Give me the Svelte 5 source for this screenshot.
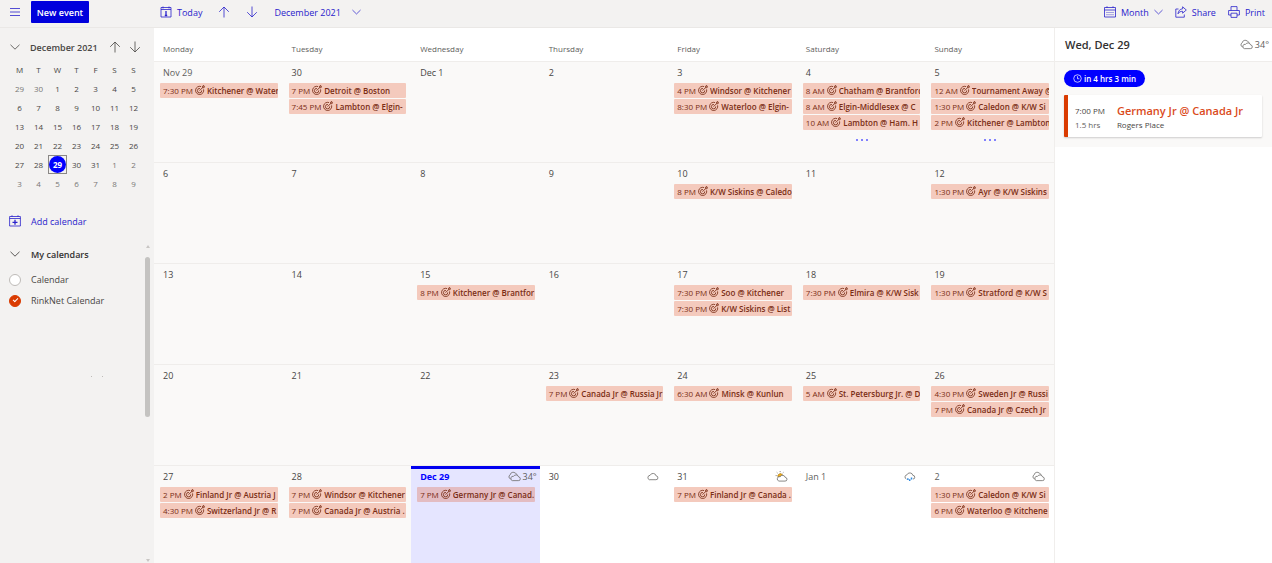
<script lang="ts">
  type CalendarEvent = { time: string; title: string };
  type Weather = 'cloudy' | 'cloud' | 'sunny' | 'rain';
  type Day = {
    label: string;
    events?: CalendarEvent[];
    more?: boolean;
    weather?: Weather;
    temp?: string;
    today?: boolean;
    outside?: boolean;
    future?: boolean;
  };

  const ev = (time: string, title: string): CalendarEvent => ({ time, title });

  const weekdays = [
    'Monday',
    'Tuesday',
    'Wednesday',
    'Thursday',
    'Friday',
    'Saturday',
    'Sunday',
  ];

  const weeks: Day[][] = [
    [
      { label: 'Nov 29', outside: true, events: [ev('7:30 PM', 'Kitchener @ Water')] },
      {
        label: '30',
        events: [ev('7 PM', 'Detroit @ Boston'), ev('7:45 PM', 'Lambton @ Elgin-')],
      },
      { label: 'Dec 1' },
      { label: '2' },
      {
        label: '3',
        events: [ev('4 PM', 'Windsor @ Kitchener'), ev('8:30 PM', 'Waterloo @ Elgin-')],
      },
      {
        label: '4',
        more: true,
        events: [
          ev('8 AM', 'Chatham @ Brantford'),
          ev('8 AM', 'Elgin-Middlesex @ C'),
          ev('10 AM', 'Lambton @ Ham. H'),
        ],
      },
      {
        label: '5',
        more: true,
        events: [
          ev('12 AM', 'Tournament Away @'),
          ev('1:30 PM', 'Caledon @ K/W Si'),
          ev('2 PM', 'Kitchener @ Lambton'),
        ],
      },
    ],
    [
      { label: '6' },
      { label: '7' },
      { label: '8' },
      { label: '9' },
      { label: '10', events: [ev('8 PM', 'K/W Siskins @ Caledo')] },
      { label: '11' },
      { label: '12', events: [ev('1:30 PM', 'Ayr @ K/W Siskins')] },
    ],
    [
      { label: '13' },
      { label: '14' },
      { label: '15', events: [ev('8 PM', 'Kitchener @ Brantfor')] },
      { label: '16' },
      {
        label: '17',
        events: [ev('7:30 PM', 'Soo @ Kitchener'), ev('7:30 PM', 'K/W Siskins @ List')],
      },
      { label: '18', events: [ev('7:30 PM', 'Elmira @ K/W Sisk')] },
      { label: '19', events: [ev('1:30 PM', 'Stratford @ K/W S')] },
    ],
    [
      { label: '20' },
      { label: '21' },
      { label: '22' },
      { label: '23', events: [ev('7 PM', 'Canada Jr @ Russia Jr')] },
      { label: '24', events: [ev('6:30 AM', 'Minsk @ Kunlun')] },
      { label: '25', events: [ev('5 AM', 'St. Petersburg Jr. @ D')] },
      {
        label: '26',
        events: [ev('4:30 PM', 'Sweden Jr @ Russi'), ev('7 PM', 'Canada Jr @ Czech Jr')],
      },
    ],
    [
      {
        label: '27',
        events: [ev('2 PM', 'Finland Jr @ Austria J'), ev('4:30 PM', 'Switzerland Jr @ R')],
      },
      {
        label: '28',
        events: [ev('7 PM', 'Windsor @ Kitchener'), ev('7 PM', 'Canada Jr @ Austria .')],
      },
      {
        label: 'Dec 29',
        today: true,
        weather: 'cloudy',
        temp: '34°',
        events: [ev('7 PM', 'Germany Jr @ Canad.')],
      },
      { label: '30', future: true, weather: 'cloud' },
      {
        label: '31',
        future: true,
        weather: 'sunny',
        events: [ev('7 PM', 'Finland Jr @ Canada .')],
      },
      { label: 'Jan 1', future: true, outside: true, weather: 'rain' },
      {
        label: '2',
        future: true,
        outside: true,
        weather: 'cloudy',
        events: [ev('1:30 PM', 'Caledon @ K/W Si'), ev('6 PM', 'Waterloo @ Kitchene')],
      },
    ],
  ];

  const miniHeads = ['M', 'T', 'W', 'T', 'F', 'S', 'S'];
  // Six weeks, starting from Monday 29 November
  const miniWeeks = Array.from({ length: 6 }, (_, week) =>
    Array.from({ length: 7 }, (_, day) => {
      const offset = week * 7 + day - 1;
      if (offset < 1) return { num: 30 + offset, dim: true, today: false };
      if (offset > 31) return { num: offset - 31, dim: true, today: false };
      return { num: offset, dim: false, today: offset === 29 };
    })
  );

  let showCalendar = $state(false);
  let showRinkNet = $state(true);
</script>

{#snippet arrow(down: boolean)}
  <svg class="icon" class:flip={down} viewBox="0 0 12 12" aria-hidden="true">
    <path d="M6 11.5V1M1.2 5.8 6 1l4.8 4.8" />
  </svg>
{/snippet}

{#snippet chevron()}
  <svg class="chevron" viewBox="0 0 10 6" aria-hidden="true">
    <path d="M.5.8 5 5.2 9.5.8" />
  </svg>
{/snippet}

{#snippet weatherIcon(kind: Weather)}
  <svg class="weather" viewBox="0 0 14 12" aria-hidden="true">
    {#if kind === 'cloudy'}
      <path d="M4.800 10.500h6.400a2 2 0 0 0 .3-4A3 3 0 0 0 6 5.800 2.400 2.400 0 0 0 4.800 10.500Z" />
      <path d="M2.800 8.600A2.300 2.300 0 0 1 2.200 4.300 3.400 3.400 0 0 1 8 2.400L10.300 4.200" />
    {:else if kind === 'cloud'}
      <path d="M3.500 9.500h7.200a2 2 0 0 0 .3-4.100A3.500 3.500 0 0 0 4.400 4.700 2.500 2.500 0 0 0 3.500 9.500Z" />
    {:else if kind === 'sunny'}
      <path class="sun" d="M3.300 6.800a2.600 2.600 0 1 1 4.900-2.300L5.500 6Z" />
      <path d="M5.500 1.200V0M2.700 2.300l-.9-.9M8.300 2.300l.9-.9M1.800 5H.6" />
      <path class="fill" d="M4.200 11h6.600a2 2 0 0 0 .3-4A3 3 0 0 0 5.600 6.200 2.500 2.500 0 0 0 4.200 11Z" />
    {:else}
      <path d="M3.600 8.800a2.400 2.400 0 0 1 .6-4.600A3.400 3.400 0 0 1 10.700 4.800a2 2 0 0 1 .1 4" />
      <path class="drop" d="M5.200 7.800v2M7.200 9v2M9.200 7.200v2" />
    {/if}
  </svg>
{/snippet}

{#snippet target()}
  <svg class="target" viewBox="0 0 12 12" aria-hidden="true">
    <path d="M7.300 1.900A4.900 4.900 0 1 0 10.300 5.200" />
    <path d="M6 4.200A2.600 2.600 0 1 0 8.100 6.500" />
    <path d="M5.400 6.800 9 3.200V1.500L10.400.4V1.900L11.700 2 10.600 3.300H9" />
  </svg>
{/snippet}

<div class="app">
  <header class="topbar">
    <div class="topbar-left">
      <button class="plain" type="button" aria-label="Toggle navigation">
        <svg class="icon" viewBox="0 0 12 12" aria-hidden="true">
          <path d="M1 2.500h10M1 6h10M1 9.500h10" />
        </svg>
      </button>
      <button class="new-event" type="button">New event</button>
    </div>
    <div class="toolbar">
      <button class="plain" type="button">
        <svg class="icon" viewBox="0 0 12 12" aria-hidden="true">
          <path d="M1 1.500h10v9.500H1ZM1 3.500h10M3 .5v2M9 .5v2" />
          <path class="solid" d="M6 5v2M6 7v3M4.800 9.500h2.400" />
        </svg>
        Today
      </button>
      <button class="plain" type="button" aria-label="Previous month">{@render arrow(false)}</button>
      <button class="plain" type="button" aria-label="Next month">{@render arrow(true)}</button>
      <button class="plain range" type="button">December 2021 {@render chevron()}</button>
    </div>
    <div class="actions">
      <button class="plain" type="button">
        <svg class="icon" viewBox="0 0 12 12" aria-hidden="true">
          <path d="M.5 1.500h11v9.500H.5ZM.5 4h11M3 .3v1.500M9 .3v1.500" />
          <path class="dots" d="M2.500 6.500h7M2.500 8.700h7" />
        </svg>
        Month {@render chevron()}
      </button>
      <button class="plain" type="button">
        <svg class="icon" viewBox="0 0 12 12" aria-hidden="true">
          <path d="M3.500 3H.8v8.200h8.500V8.500" />
          <path d="M7.600.8 11.300 4 7.600 7.200V5.300C5.500 5.300 4 6 3 7.800 3.300 4.800 5 3 7.600 2.800Z" />
        </svg>
        Share
      </button>
      <button class="plain" type="button">
        <svg class="icon" viewBox="0 0 12 12" aria-hidden="true">
          <path d="M3 4.500V.6h6v3.900M3 9H.6V4.500h10.800V9H9M3 7.200h6v4.200H3Z" />
        </svg>
        Print
      </button>
    </div>
  </header>

  <div class="body">
    <aside class="sidebar">
      <div class="mini-head">
        <button class="plain" type="button" aria-label="Collapse calendar">{@render chevron()}</button>
        <span class="mini-title">December 2021</span>
        <button class="plain" type="button" aria-label="Previous">{@render arrow(false)}</button>
        <button class="plain" type="button" aria-label="Next">{@render arrow(true)}</button>
      </div>
      <table class="mini">
        <thead>
          <tr>
            {#each miniHeads as head}
              <th>{head}</th>
            {/each}
          </tr>
        </thead>
        <tbody>
          {#each miniWeeks as week}
            <tr>
              {#each week as day}
                <td class:dim={day.dim} class:current={day.today}>
                  <button type="button">{day.num}</button>
                </td>
              {/each}
            </tr>
          {/each}
        </tbody>
      </table>

      <button class="plain add" type="button">
        <svg class="icon" viewBox="0 0 12 12" aria-hidden="true">
          <path d="M.6 1.500h10.800v9.500H.6ZM.6 3.500h10.800M3 .3v1.500M9 .3v1.500" />
          <path class="solid" d="M6 4.800v5M3.500 7.300h5" />
        </svg>
        Add calendar
      </button>

      <div class="lists">
        <div class="list-items">
          <button class="plain group" type="button">{@render chevron()} My calendars</button>
          <label class="calendar">
            <input type="checkbox" bind:checked={showCalendar} />
            Calendar
          </label>
          <label class="calendar">
            <input type="checkbox" bind:checked={showRinkNet} />
            RinkNet Calendar
          </label>
          <div class="specks"><i></i><i></i></div>
        </div>
        <div class="scrollbar" aria-hidden="true">
          <span class="cap up"></span>
          <span class="thumb"></span>
          <span class="cap down"></span>
        </div>
      </div>
    </aside>

    <main class="month">
      <table class="grid">
        <thead>
          <tr>
            {#each weekdays as name}
              <th>{name}</th>
            {/each}
          </tr>
        </thead>
        <tbody>
          {#each weeks as week}
            <tr>
              {#each week as day}
                <td class:today={day.today} class:future={day.future}>
                  <div class="day-head" class:outside={day.outside}>
                    <span class="day-label">{day.label}</span>
                    {#if day.weather}
                      <span class="forecast">
                        {@render weatherIcon(day.weather)}
                        {day.temp ?? ''}
                      </span>
                    {/if}
                  </div>
                  <div class="events">
                    {#each day.events ?? [] as event}
                      <button class="event" type="button">
                        <span>{event.time}</span>
                        {@render target()}
                        <strong>{event.title}</strong>
                      </button>
                    {/each}
                    {#if day.more}
                      <button class="more" type="button" aria-label="More events">
                        <i></i><i></i><i></i>
                      </button>
                    {/if}
                  </div>
                </td>
              {/each}
            </tr>
          {/each}
        </tbody>
      </table>
    </main>

    <section class="agenda">
      <div class="agenda-head">
        <h2>Wed, Dec 29</h2>
        <span class="forecast">{@render weatherIcon('cloudy')} 34°</span>
      </div>
      <div class="agenda-body">
        <span class="pill">
          <svg viewBox="0 0 10 10" aria-hidden="true">
            <circle cx="5" cy="5" r="4.200" />
            <path d="M5 2.500V5.300h2" />
          </svg>
          in 4 hrs 3 min
        </span>
        <article class="card">
          <div class="when">
            <span>7:00 PM</span>
            <span class="length">1.5 hrs</span>
          </div>
          <div class="what">
            <h3>Germany Jr @ Canada Jr</h3>
            <span>Rogers Place</span>
          </div>
        </article>
      </div>
    </section>
  </div>
</div>

<style>
  :global(body) {
    margin: 0;
    font-family: 'Open Sans', 'Noto Sans', sans-serif;
    background: #fff;
  }

  .app {
    display: flex;
    flex-direction: column;
    height: 100vh;
    overflow: hidden;
    font-size: 9px;
    color: #484644;
  }

  button {
    margin: 0;
    padding: 0;
    border: 0;
    background: none;
    font: inherit;
    color: inherit;
    cursor: pointer;
  }

  table {
    border-collapse: collapse;
    table-layout: fixed;
  }

  svg {
    display: block;
    flex: none;
    fill: none;
    stroke: currentColor;
    stroke-width: 0.8;
  }

  .icon {
    width: 12px;
    height: 12px;
  }

  .flip {
    transform: rotate(180deg);
  }

  .chevron {
    width: 10px;
    height: 6px;
  }

  .topbar .chevron {
    width: 9px;
  }

  .solid {
    stroke-width: 1.3;
  }

  .dots {
    stroke-dasharray: 1 1;
  }

  .plain {
    display: flex;
    align-items: center;
    gap: 5px;
  }

  /* Top bar */
  .topbar {
    display: flex;
    flex: none;
    height: 27px;
    background: #f3f2f1;
    border-bottom: 1px solid #eae8e6;
    color: #2a22cc;
  }

  .topbar-left {
    display: flex;
    align-items: center;
    gap: 10px;
    width: 145px;
    height: 24px;
    padding-left: 9px;
  }

  .new-event {
    width: 58px;
    height: 22px;
    background: #0000dc;
    border-radius: 1px;
    color: #fff;
    font-weight: 600;
  }

  .toolbar {
    display: flex;
    align-items: center;
    gap: 16px;
    height: 24px;
    padding-left: 6px;
  }

  .range {
    gap: 11px;
  }

  .actions {
    display: flex;
    align-items: center;
    gap: 12px;
    height: 24px;
    margin-left: auto;
    padding-right: 7px;
  }

  .body {
    display: flex;
    flex: 1;
    min-height: 0;
  }

  /* Sidebar */
  .sidebar {
    display: flex;
    flex: none;
    flex-direction: column;
    width: 154px;
    background: #f3f2f1;
  }

  .mini-head {
    display: flex;
    align-items: center;
    gap: 8px;
    padding: 9px 13px 0 10px;
    height: 20px;
  }

  .mini-title {
    flex: 1;
    padding-left: 2px;
    font-weight: 600;
    white-space: nowrap;
  }

  .mini {
    width: 133px;
    margin: 3px 0 0 10px;
    font-size: 8px;
  }

  .mini th,
  .mini td {
    height: 19px;
    padding: 0;
    font-weight: 400;
    text-align: center;
  }

  .mini td button {
    width: 19px;
    height: 17px;
    line-height: 17px;
  }

  .mini .dim {
    color: #797775;
  }

  .mini .current {
    outline: 1px solid #8a8886;
    outline-offset: -1px;
  }

  .mini .current button {
    width: 17px;
    border-radius: 50%;
    background: #00f;
    color: #fff;
    font-weight: 700;
  }

  .add {
    gap: 10px;
    margin: 20px 0 0 9px;
    height: 16px;
    color: #2a22cc;
  }

  .lists {
    display: flex;
    flex: 1;
    justify-content: space-between;
    min-height: 0;
    margin-top: 14px;
  }

  .list-items {
    padding-left: 9px;
  }

  .group {
    gap: 11px;
    height: 22px;
    padding-left: 1px;
    font-weight: 600;
    color: #323130;
  }

  .calendar {
    display: flex;
    align-items: center;
    gap: 10px;
    height: 21px;
    white-space: nowrap;
  }

  .group + .calendar {
    margin-top: 4px;
  }

  .calendar input {
    appearance: none;
    display: grid;
    place-items: center;
    box-sizing: border-box;
    width: 12px;
    height: 12px;
    margin: 0;
    border: 1px solid #bebbb8;
    border-radius: 50%;
    background: #fff;
  }

  .calendar input:checked {
    border-color: #da3b01;
    background: #da3b01;
  }

  .calendar input:checked::after {
    content: '';
    width: 4px;
    height: 2px;
    margin-bottom: 2px;
    border: solid #fff;
    border-width: 0 0 1px 1px;
    transform: rotate(-45deg);
  }

  .specks {
    display: flex;
    gap: 10px;
    margin: 65px 0 0 82px;
  }

  .specks i {
    width: 1px;
    height: 1px;
    background: #bebbb8;
  }

  .scrollbar {
    display: flex;
    flex-direction: column;
    align-items: center;
    width: 5px;
    margin: 2px 4px 1px 0;
  }

  .cap {
    border: 2px solid transparent;
  }

  .up {
    margin-bottom: 9px;
    border-top: 0;
    border-bottom: 3px solid #c8c6c4;
  }

  .down {
    margin-top: auto;
    border-bottom: 0;
    border-top: 3px solid #c8c6c4;
  }

  .thumb {
    width: 5px;
    height: 160px;
    border-radius: 3px;
    background: #c4c3c1;
  }

  /* Month grid */
  .month {
    flex: 1;
    min-width: 0;
    border-right: 1px solid #f0eeec;
  }

  .grid {
    width: 100%;
  }

  .grid th {
    height: 33px;
    padding: 9px 0 0 9px;
    box-sizing: border-box;
    font-size: 8px;
    font-weight: 400;
    text-align: left;
    color: #605e5c;
  }

  .grid td {
    height: 101px;
    padding: 0;
    box-sizing: border-box;
    border-top: 1px solid #efedeb;
    background: #faf9f8;
    vertical-align: top;
  }

  .grid td.future {
    background: #fff;
  }

  .grid td.today {
    background: #e5e5ff;
    box-shadow: inset 0 3px #0000f0;
  }

  .day-head {
    display: flex;
    align-items: center;
    justify-content: space-between;
    height: 21px;
    padding: 0 9px;
  }

  .outside {
    color: #605e5c;
  }

  .today .day-head {
    padding-right: 3px;
  }

  .today .day-label {
    color: #00f;
    font-weight: 700;
  }

  .forecast {
    display: flex;
    align-items: center;
    gap: 2px;
    color: #605e5c;
  }

  .weather {
    width: 13px;
    height: 11px;
  }

  .sun {
    fill: #f2b01e;
    stroke: #a87b1c;
  }

  .fill {
    fill: #fff;
  }

  .drop {
    stroke: #2f8ae0;
    stroke-width: 1.6;
  }

  .events {
    display: flex;
    flex-direction: column;
    gap: 1px;
    padding: 0 5px 0 6px;
  }

  .event {
    display: flex;
    align-items: center;
    gap: 2px;
    height: 15px;
    padding: 0 0 0 3px;
    border-radius: 1px;
    background: #f4cabd;
    color: #7a2d14;
    font-size: 8px;
    line-height: 15px;
    white-space: nowrap;
  }

  .today .event {
    background: #e3bcc2;
  }

  .event strong {
    flex: 1;
    min-width: 0;
    overflow: hidden;
    font-weight: 600;
    text-align: left;
  }

  .target {
    width: 10px;
    height: 10px;
    stroke-width: 1;
  }

  .more {
    display: flex;
    align-self: center;
    gap: 3px;
    padding: 8px 0;
  }

  .more i {
    width: 2px;
    height: 2px;
    border-radius: 1px;
    background: #5a5aff;
  }

  /* Agenda */
  .agenda {
    flex: none;
    width: 217px;
    background: #fff;
  }

  .agenda-head {
    display: flex;
    align-items: center;
    justify-content: space-between;
    height: 33px;
    padding: 0 3px 0 10px;
    border-bottom: 1px solid #efedeb;
  }

  .agenda h2 {
    margin: 0;
    font-size: 11px;
    font-weight: 600;
    color: #323130;
  }

  .agenda-body {
    padding: 8px 10px 10px 9px;
    background: #faf9f8;
  }

  .pill {
    display: flex;
    align-items: center;
    justify-content: center;
    gap: 2px;
    width: 81px;
    height: 17px;
    border-radius: 9px;
    background: #00f;
    color: #fff;
    font-size: 8px;
    font-weight: 600;
  }

  .pill svg {
    width: 9px;
    height: 9px;
  }

  .card {
    display: flex;
    gap: 12px;
    box-sizing: border-box;
    height: 42px;
    margin-top: 8px;
    padding: 9px 7px 0;
    border-left: 4px solid #da3b01;
    border-radius: 1px;
    background: #fff;
    box-shadow: 0 1px 2px rgba(0, 0, 0, 0.18);
    font-size: 8px;
    line-height: 14px;
  }

  .when,
  .what {
    display: flex;
    flex-direction: column;
    white-space: nowrap;
  }

  .length {
    color: #605e5c;
  }

  .card h3 {
    margin: 0;
    font-size: 11px;
    font-weight: 600;
    line-height: 14px;
    color: #da4a1b;
  }
</style>
